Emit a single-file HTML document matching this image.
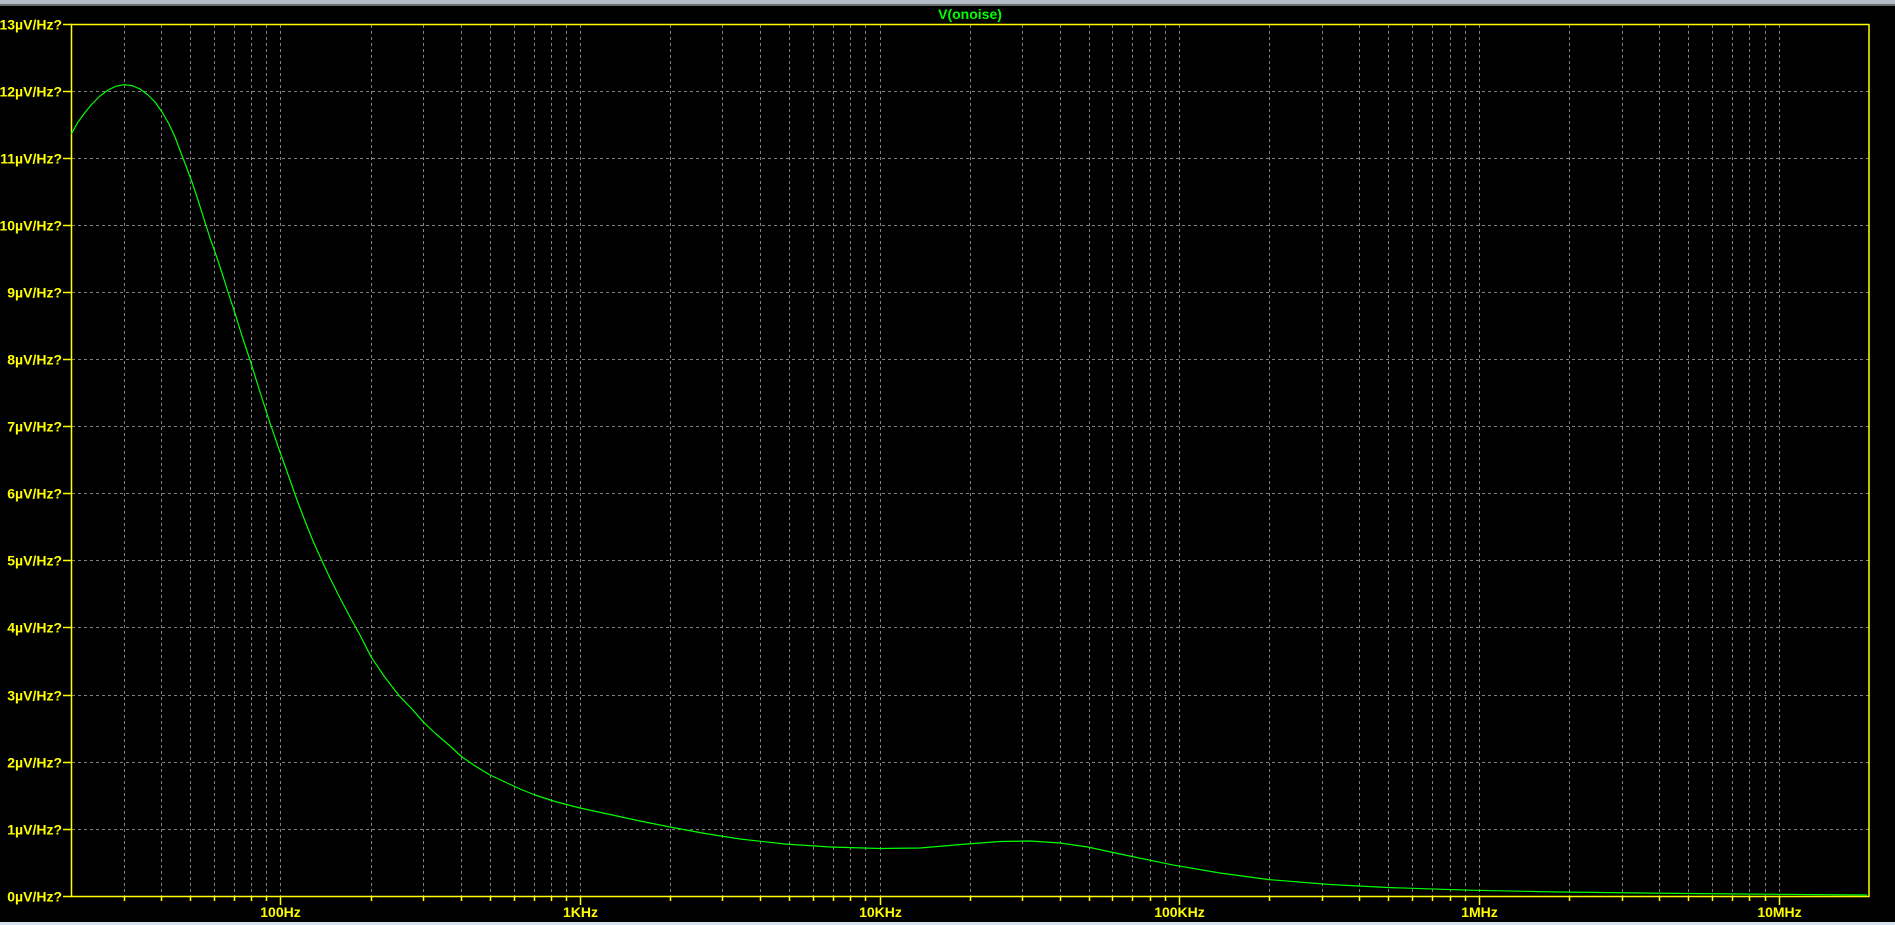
<!DOCTYPE html>
<html><head><meta charset="utf-8"><style>
html,body{margin:0;padding:0;background:#000;width:1895px;height:925px;overflow:hidden}
svg{display:block}
text{font-family:"Liberation Sans",sans-serif;font-weight:bold;font-size:14px;fill:#ffff00}
</style></head><body>
<svg width="1895" height="925" xmlns="http://www.w3.org/2000/svg">
<rect x="0" y="0" width="1895" height="925" fill="#000"/>
<rect x="0" y="0" width="1895" height="4" fill="#b4bcc8"/>
<rect x="0" y="4" width="1895" height="2" fill="#6c6c6c"/>
<rect x="0" y="922" width="1895" height="3" fill="#d6e2ee"/>
<g stroke="#808080" stroke-width="1" stroke-dasharray="3,3" fill="none">
<path d="M72 91.5H1869M72 158.5H1869M72 225.5H1869M72 292.5H1869M72 359.5H1869M72 426.5H1869M72 493.5H1869M72 560.5H1869M72 627.5H1869M72 695.5H1869M72 762.5H1869M72 829.5H1869"/>
<path d="M124.5 25V896M161.5 25V896M190.5 25V896M214.5 25V896M234.5 25V896M251.5 25V896M266.5 25V896M280.5 25V896
M371.5 25V896M423.5 25V896M461.5 25V896M490.5 25V896M514.5 25V896M534.5 25V896M551.5 25V896M566.5 25V896M580.5 25V896
M670.5 25V896M722.5 25V896M760.5 25V896M789.5 25V896M813.5 25V896M833.5 25V896M850.5 25V896M865.5 25V896M880.5 25V896
M970.5 25V896M1022.5 25V896M1060.5 25V896M1089.5 25V896M1112.5 25V896M1132.5 25V896M1150.5 25V896M1165.5 25V896M1179.5 25V896
M1269.5 25V896M1322.5 25V896M1359.5 25V896M1388.5 25V896M1412.5 25V896M1432.5 25V896M1450.5 25V896M1465.5 25V896M1479.5 25V896
M1569.5 25V896M1622.5 25V896M1659.5 25V896M1688.5 25V896M1712.5 25V896M1732.5 25V896M1749.5 25V896M1765.5 25V896M1779.5 25V896"/>
</g>
<g stroke="#ffff00" stroke-width="1.5" fill="none">
<rect x="71.5" y="24.5" width="1797.5" height="872"/>
<path d="M63 24.5H72M63 91.5H72M63 158.5H72M63 225.5H72M63 292.5H72M63 359.5H72M63 426.5H72M63 493.5H72M63 560.5H72M63 627.5H72M63 695.5H72M63 762.5H72M63 829.5H72M63 896.5H72"/>
<path d="M124.5 896V901M161.5 896V901M190.5 896V901M214.5 896V901M234.5 896V901M251.5 896V901M266.5 896V901M280.5 896V905
M371.5 896V901M423.5 896V901M461.5 896V901M490.5 896V901M514.5 896V901M534.5 896V901M551.5 896V901M566.5 896V901M580.5 896V905
M670.5 896V901M722.5 896V901M760.5 896V901M789.5 896V901M813.5 896V901M833.5 896V901M850.5 896V901M865.5 896V901M880.5 896V905
M970.5 896V901M1022.5 896V901M1060.5 896V901M1089.5 896V901M1112.5 896V901M1132.5 896V901M1150.5 896V901M1165.5 896V901M1179.5 896V905
M1269.5 896V901M1322.5 896V901M1359.5 896V901M1388.5 896V901M1412.5 896V901M1432.5 896V901M1450.5 896V901M1465.5 896V901M1479.5 896V905
M1569.5 896V901M1622.5 896V901M1659.5 896V901M1688.5 896V901M1712.5 896V901M1732.5 896V901M1749.5 896V901M1765.5 896V901M1779.5 896V905"/>
</g>
<polyline fill="none" stroke="#00ff00" stroke-width="1.2" stroke-linejoin="round" points="71.5,133.7 78,122 85,112.5 92,104 100,96 108,90 116,86.2 124,84.7 132,85.6 140,89 148,95 155,102 162,112 169,124 175,137 181,153 186,166 192,182 198,200 203.3,217 210,238 216.7,257 222,273 226.7,288 235,313.3 242,336 250,360 260,392 270,423 280,452 290,480 297,500 305,521 313,541 322,561 330,578 340,598 350,617 360,635 371,656.7 385,677.5 400,696.7 412,709 423,721.7 436,734 450,746 462,757 476,766.5 490,775 505,782 520,789 535,795 555,801.5 580,808 610,814.5 640,821 670,827 705,833.5 740,839 785,844 830,847 880,848.5 920,848 966.8,844 1000,841.5 1030,841 1060,843 1087.6,847 1120,854 1172,864.8 1220,873 1269,879.6 1330,884.5 1390,887.6 1474,890.3 1560,892 1631,892.9 1740,894 1867,895"/>
<text x="62" y="29.5" text-anchor="end">13µV/Hz?</text>
<text x="62" y="96.5" text-anchor="end">12µV/Hz?</text>
<text x="62" y="163.5" text-anchor="end">11µV/Hz?</text>
<text x="62" y="230.5" text-anchor="end">10µV/Hz?</text>
<text x="62" y="297.5" text-anchor="end">9µV/Hz?</text>
<text x="62" y="364.5" text-anchor="end">8µV/Hz?</text>
<text x="62" y="431.5" text-anchor="end">7µV/Hz?</text>
<text x="62" y="498.5" text-anchor="end">6µV/Hz?</text>
<text x="62" y="565.5" text-anchor="end">5µV/Hz?</text>
<text x="62" y="632.5" text-anchor="end">4µV/Hz?</text>
<text x="62" y="700.5" text-anchor="end">3µV/Hz?</text>
<text x="62" y="767.5" text-anchor="end">2µV/Hz?</text>
<text x="62" y="834.5" text-anchor="end">1µV/Hz?</text>
<text x="62" y="901.5" text-anchor="end">0µV/Hz?</text>
<text x="280.5" y="917" text-anchor="middle">100Hz</text>
<text x="580.5" y="917" text-anchor="middle">1KHz</text>
<text x="880.5" y="917" text-anchor="middle">10KHz</text>
<text x="1179.5" y="917" text-anchor="middle">100KHz</text>
<text x="1479.5" y="917" text-anchor="middle">1MHz</text>
<text x="1779.5" y="917" text-anchor="middle">10MHz</text>
<text x="970" y="19" text-anchor="middle" style="fill:#00ff00">V(onoise)</text>
</svg>
</body></html>
